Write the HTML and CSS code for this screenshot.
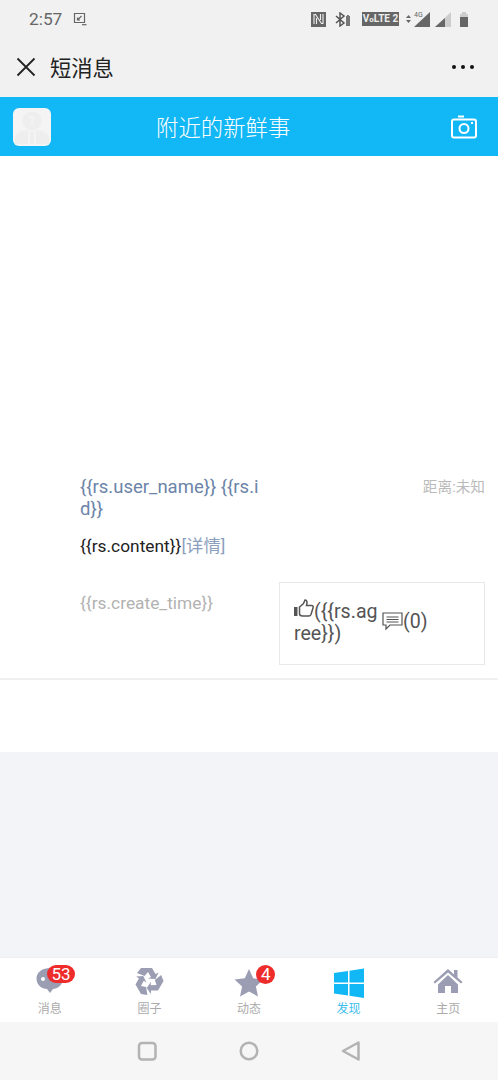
FILE: index.html
```html
<!DOCTYPE html>
<html lang="zh-CN">
<head>
    <meta charset="UTF-8">
    <meta name="viewport" content="width=device-width, initial-scale=1.0">
    <title>短消息</title>
    <link rel="stylesheet" href="styles.css">
</head>
<body>
    <div class="phone">
        <div class="status-bar">
            <div class="status-left">
                <span class="clock">2:57</span>
                <svg width="14" height="14" viewBox="0 0 14 14" fill="none" stroke="#666" stroke-width="1.2"><path d="M1.500 1.500h10v9h-10z"/><path d="M4.500 8l4-4M4.500 5.500V8H7"/><path d="M9 12.700h4.500"/></svg>
            </div>
            <div class="status-right">
                <svg class="st-nfc" width="16" height="16" viewBox="0 0 16 16"><path fill="#666" d="M0 1h15v15H0z"/><path fill="none" stroke="#eee" stroke-width="1.100" d="M3 13V3.500h1.500L10.500 12.500H12V3M5.500 13V7M9.500 3v6"/></svg>
                <svg class="st-bt" width="18" height="15" viewBox="0 0 18 15"><path fill="none" stroke="#555" stroke-width="1.500" d="M1 4l8 7-4 3V1l4 3-8 7"/><path fill="#777" d="M11 4h1V3h2v1h1v10h-4z"/></svg>
                <span class="volte">V<i>o</i>LTE 2</span>
                <svg class="st-signal" width="27" height="16" viewBox="0 0 27 16"><path fill="#666" d="M1 7l2.500-3L6 7zM1 9l2.500 3L6 9z"/><path fill="#666" d="M25 1v15H9z"/><text x="9" y="6" class="tiny">4G</text></svg>
                <svg class="st-signal2" width="18" height="16" viewBox="0 0 18 16"><path fill="#ccc" d="M17 1v15H1z"/><path fill="#666" d="M11 7v9H1z"/></svg>
                <svg class="st-battery" width="10" height="16" viewBox="0 0 10 16"><path fill="#ccc" d="M3 1h4v2h2v3H1V3h2z"/><path fill="#666" d="M1 6h8v10H1z"/></svg>
            </div>
        </div>

        <div class="title-bar">
            <svg class="close" width="20" height="20" viewBox="0 0 20 20" stroke="#222" stroke-width="1.800"><path d="M1.500 1.500l17 17M18.500 1.500l-17 17"/></svg>
            <span class="title">短消息</span>
            <div class="more"><i></i><i></i><i></i></div>
        </div>

        <div class="header">
            <div class="avatar">
                <svg width="38" height="38" viewBox="0 0 38 38"><circle cx="19" cy="13" r="9.500" fill="#eee"/><path fill="#eee" d="M2 36v-7c2-5 8-6 13-7v14zM36 36v-7c-2-5-8-6-13-7v14zM17 24h4v12h-4z"/><text x="19" y="17" class="q">?</text></svg>
            </div>
            <h1>附近的新鲜事</h1>
            <svg class="camera" width="26" height="24" viewBox="0 0 26 24" fill="none" stroke="#fff" stroke-width="2"><rect x="1" y="4.500" width="24" height="18" rx="2"/><circle cx="13" cy="13.500" r="4.500"/><path d="M7 1.500h6"/><path d="M20 8h2"/></svg>
        </div>

        <div class="content">
            <div class="post">
                <div class="post-top">
                    <div class="user">{{rs.user_name}} {{rs.id}}</div>
                    <div class="distance">距离:未知</div>
                </div>
                <div class="text">{{rs.content}}<a>[详情]</a></div>
                <div class="post-bottom">
                    <div class="time">{{rs.create_time}}</div>
                    <div class="actions">
                        <div class="agree">
                            <svg class="thumb" width="20" height="20" viewBox="0 0 20 20"><path fill="#555" d="M0 8h3.500v9H0z"/><path fill="none" stroke="#555" stroke-width="1.500" d="M5.500 8l4-3.500L11 1c2 0 2.500 2 1.500 5.500h5c1.500 0 2 1 1.500 2.500l-2 6.500c-.5 1-1 1.500-2 1.500H8.500c-2 0-3-1-3-2.500z"/></svg>({{rs.agree}})
                        </div>
                        <div class="comment">
                            <svg width="21" height="20" viewBox="0 0 21 20" fill="none" stroke="#555" stroke-width="1.200"><path d="M1 2h19v12H8l-4 4v-4H1z"/><path d="M4.500 6h12M4.500 8.500h12M4.500 11h12"/></svg><span>(0)</span>
                        </div>
                    </div>
                </div>
            </div>
        </div>

        <div class="spacer"></div>

        <div class="tabs">
            <div class="tab">
                <svg width="30" height="30" viewBox="0 3 30 30"><path fill="#9b9db3" d="M15 3c7 0 13 4 13 10.500S22 24 18 24l-3 4-3-4C7 24 1.500 20 1.500 13.500S8 3 15 3z"/><circle cx="8" cy="14" r="2" fill="#fff"/></svg>
                <span>消息</span>
                <em class="badge wide">53</em>
            </div>
            <div class="tab">
                <svg class="recycle" width="32" height="30" viewBox="0 3 32 30" fill="#9b9db3">
                    <path id="arrow" d="M8 3H19L22.500 9L25.500 7.500L22.500 14L15 13.500L18 12L15 7L11.500 11L4 8Z"/>
                    <use href="#arrow" transform="rotate(120 15.500 16)"/>
                    <use href="#arrow" transform="rotate(240 15.500 16)"/>
                </svg>
                <span>圈子</span>
            </div>
            <div class="tab">
                <svg width="30" height="30" viewBox="0 0 30 30"><path fill="#9b9db3" d="M15 1l4.200 9.300 10.300 1.200-7.600 6.900 2.100 10.100-9-5.100-9 5.100 2.100-10.100L.5 11.500l10.300-1.200z"/></svg>
                <span>动态</span>
                <em class="badge">4</em>
            </div>
            <div class="tab active">
                <svg width="30" height="30" viewBox="0 0 30 30" fill="#12b7f5"><path d="M0 5l14-2v11.500H0zM15.500 2.700L30 .5v14H15.500zM0 16h14v11.500L0 25.500zM15.500 16H30v14l-14.500-2.200z"/></svg>
                <span>发现</span>
            </div>
            <div class="tab">
                <svg width="30" height="30" viewBox="0 2 30 30" fill="#9b9db3"><path d="M15 3L.5 16l1.500 1.500L15 6.500l13 11 1.500-1.500-5-4.500V4h-3.500v4.500z"/><path d="M5 18.500L15 9l10 9.500V27h-7v-7h-6v7H5z"/></svg>
                <span>主页</span>
            </div>
        </div>

        <div class="nav-bar">
            <svg width="20" height="20" viewBox="0 0 20 20" fill="none" stroke="#b3b3b3" stroke-width="2.500"><rect x="2" y="2" width="16.500" height="16.500" rx="3"/></svg>
            <svg width="20" height="20" viewBox="0 0 20 20" fill="none" stroke="#b3b3b3" stroke-width="2.500"><circle cx="10" cy="10" r="8.300"/></svg>
            <svg width="20" height="20" viewBox="0 0 20 20" fill="none" stroke="#b3b3b3" stroke-width="2.500" stroke-linejoin="round"><path d="M17.500 1.500v17L2 10z"/></svg>
        </div>
    </div>
</body>
</html>
```

FILE: styles.css
```css
* {
    box-sizing: border-box;
}
body {
    margin: 0;
    font-family: Roboto, "Noto Sans CJK SC", sans-serif;
    background-color: #f2f4f8;
}
.phone {
    width: 498px;
    height: 1080px;
    display: flex;
    flex-direction: column;
    overflow: hidden;
}
.status-bar {
    height: 38px;
    background-color: #f1f1f1;
    display: flex;
    justify-content: space-between;
    align-items: center;
    padding: 0 29px 0 29px;
}
.status-left, .status-right {
    display: flex;
    align-items: center;
}
.status-left {
    gap: 11px;
}
.clock {
    font-size: 17.3px;
    color: #666;
}
.st-bt {
    margin-left: 8px;
}
.volte {
    margin-left: 9px;
    background-color: #666;
    color: #eee;
    font-size: 10px;
    font-weight: bold;
    width: 37px;
    height: 14px;
    line-height: 14px;
    text-align: center;
    white-space: nowrap;
    overflow: hidden;
}
.volte i {
    font-style: normal;
    font-size: 8px;
}
.st-signal {
    margin-left: 6px;
}
.st-signal2 {
    margin-left: 2px;
}
.st-battery {
    margin-left: 7px;
}
.tiny {
    font-family: Roboto, sans-serif;
    font-size: 7px;
    fill: #666;
}
.title-bar {
    height: 59px;
    background-color: #f1f1f1;
    display: flex;
    align-items: center;
    padding: 0 24px 2px 16px;
}
.title {
    font-size: 21.3px;
    color: #222;
    margin-left: 14px;
}
.more {
    margin-left: auto;
    display: flex;
    gap: 5px;
}
.more i {
    width: 4px;
    height: 4px;
    border-radius: 50%;
    background-color: #111;
}
.header {
    height: 59px;
    background-color: #12b7f5;
    display: flex;
    align-items: center;
    padding: 0 21px 0 13px;
}
.avatar {
    width: 38px;
    height: 38px;
    border-radius: 6px;
    background-color: #f4f4f4;
    overflow: hidden;
}
.q {
    font-family: Roboto, sans-serif;
    font-size: 13px;
    font-weight: bold;
    fill: #f4f4f4;
    text-anchor: middle;
}
.header h1 {
    margin: 0 0 1px 105px;
    font-size: 22.4px;
    font-weight: 300;
    color: #fff;
}
.camera {
    margin-left: auto;
}
.content {
    height: 596px;
    background-color: #fff;
    padding-top: 319px;
}
.post {
    height: 205px;
    padding: 0 13px 0 80px;
    border-bottom: 2px solid #f0f0f0;
}
.post-top {
    display: flex;
    justify-content: space-between;
    padding-top: 1px;
}
.user {
    width: 183px;
    font-size: 18.5px;
    line-height: 22px;
    color: #6c84a8;
    word-break: break-all;
}
.distance {
    font-size: 14.67px;
    line-height: 23px;
    color: #bbb;
}
.text {
    margin-top: 15px;
    font-size: 17.33px;
    line-height: 23px;
    color: #222;
}
.text a {
    color: #8ca0bd;
}
.post-bottom {
    margin-top: 24px;
    display: flex;
    justify-content: space-between;
}
.time {
    font-size: 17.33px;
    line-height: 23px;
    padding-top: 10px;
    color: #b2b2b2;
}
.actions {
    width: 206px;
    height: 83px;
    border: 1px solid #e8e8e8;
    padding: 16px 14px 0;
    display: flex;
    align-items: flex-start;
    font-size: 19.6px;
    line-height: 22px;
    color: #555;
}
.agree {
    width: 88px;
    word-break: break-all;
}
.thumb {
    vertical-align: -1px;
}
.comment {
    margin: 12px 0 0 0;
    display: flex;
    align-items: flex-start;
}
.spacer {
    flex: 1;
}
.tabs {
    height: 65px;
    background-color: #fff;
    border-top: 1px solid #f0f0f0;
    display: flex;
}
.tab {
    width: 100px;
    display: flex;
    flex-direction: column;
    align-items: center;
    padding-top: 10px;
    font-size: 12px;
    color: #aaa;
    position: relative;
}
.tab span {
    line-height: 15px;
    margin-top: 4px;
}
.tab.active {
    color: #3fbdee;
}
.recycle {
    overflow: visible;
}
.badge {
    position: absolute;
    top: 7px;
    left: 57px;
    min-width: 19px;
    height: 19px;
    border-radius: 10px;
    background-color: #ee2c2c;
    color: #fff;
    font-style: normal;
    font-size: 17px;
    line-height: 19px;
    text-align: center;
}
.badge.wide {
    left: 47px;
    width: 28px;
    height: 18px;
    line-height: 18px;
}
.nav-bar {
    height: 58px;
    background-color: #f6f6f6;
    display: flex;
    align-items: center;
    padding: 0 0 0 137px;
    gap: 82px;
}
```
